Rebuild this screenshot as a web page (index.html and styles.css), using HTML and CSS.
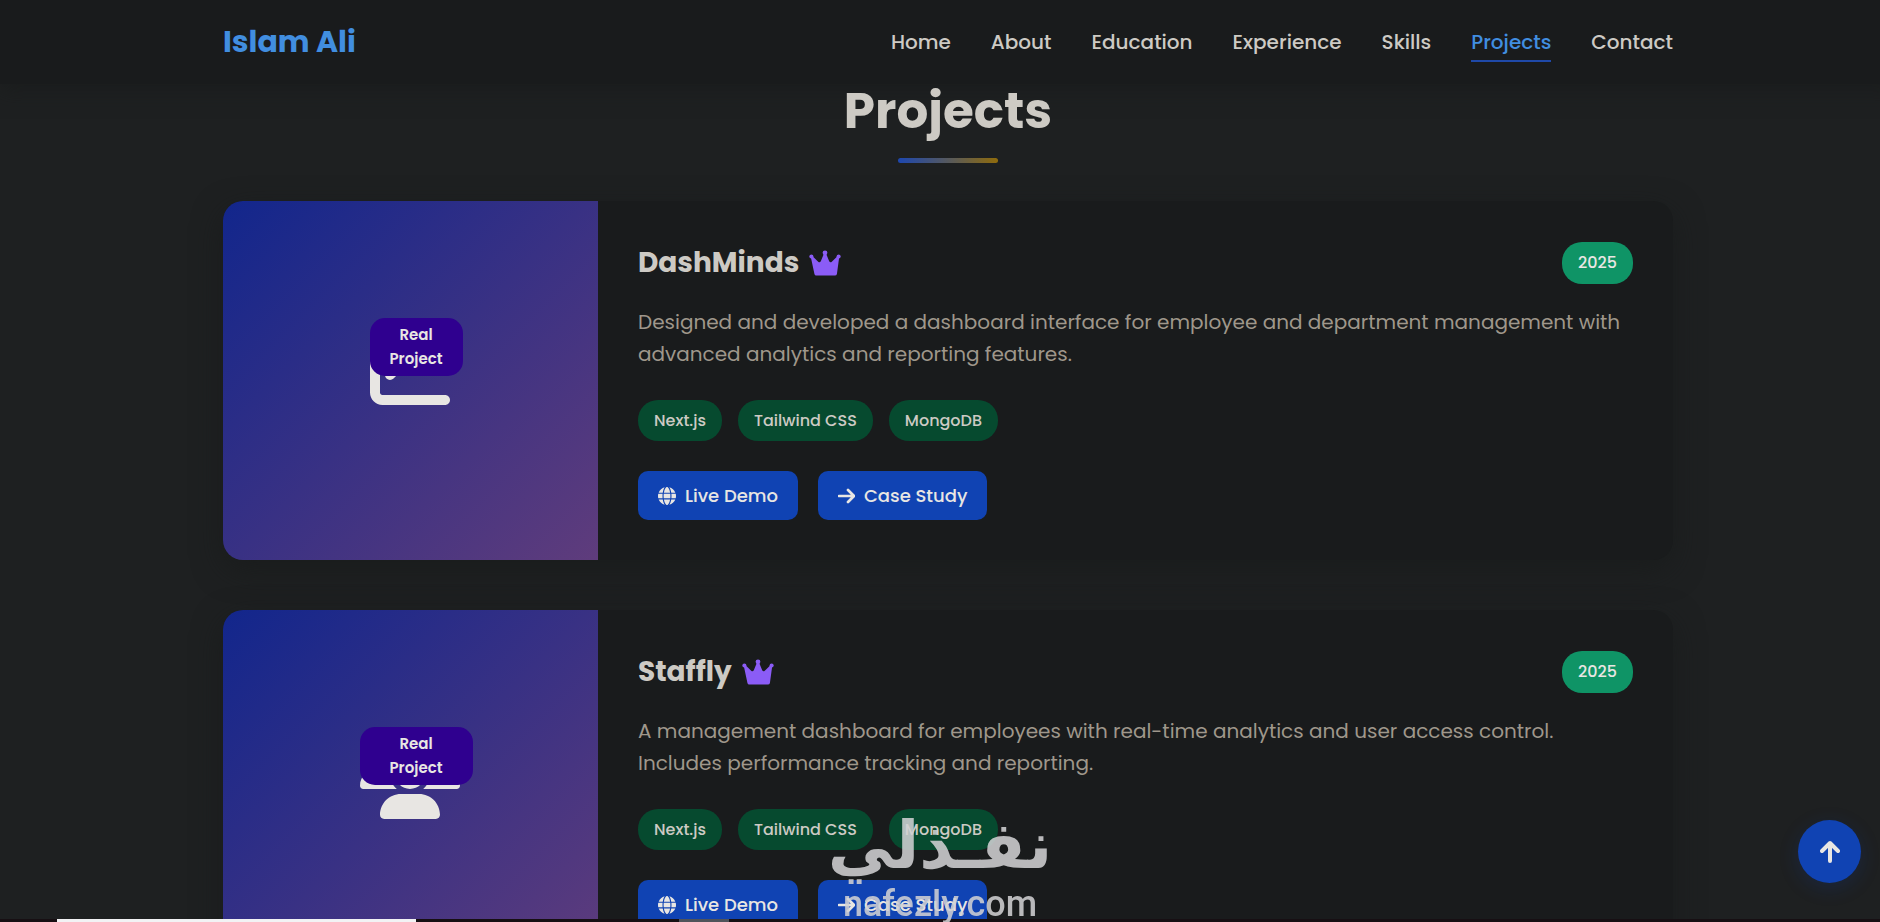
FILE: index.html
```html
<!DOCTYPE html>
<html lang="en">

<head>
    <meta charset="utf-8">
    <meta name="viewport" content="width=device-width, initial-scale=1">
    <title>Islam Ali | Projects</title>

    <link rel="stylesheet" href="styles.css">
</head>

<body>

    <!-- Icons used more than once -->
    <svg class="icon-defs" aria-hidden="true">
        <symbol id="icon-crown" viewBox="0 0 94 76">
            <circle cx="7" cy="19" r="6" />
            <circle cx="47" cy="8" r="7" />
            <circle cx="87" cy="19" r="6" />
            <path d="M5 19L9 17L27 34Q32 38 35 32L44 10H50L59 32Q62 38 67 34L85 17L89 19L82 70Q81 75 76 75H21Q17 75 16 70Z" />
        </symbol>
        <symbol id="icon-globe" viewBox="0 0 512 512">
            <path d="M352 256c0 22.2-1.2 43.6-3.3 64H163.3c-2.2-20.4-3.3-41.8-3.3-64s1.2-43.6 3.3-64H348.7c2.2 20.4 3.3 41.8 3.3 64zm28.8-64H503.9c5.3 20.5 8.1 41.9 8.1 64s-2.8 43.5-8.1 64H380.8c2.1-20.6 3.2-42 3.2-64s-1.1-43.4-3.2-64zm112.6-32H376.7c-10-63.9-29.8-117.4-55.3-151.6c78.3 20.7 142 77.5 171.9 151.6zm-149.1 0H167.7c6.1-36.4 15.5-68.6 27-94.7c10.5-23.6 22.2-40.7 33.5-51.5C239.4 3.2 248.7 0 256 0s16.6 3.2 27.8 13.8c11.3 10.8 23 27.9 33.5 51.5c11.6 26 20.9 58.2 27 94.7zm-209 0H18.6C48.6 85.9 112.2 29.1 190.6 8.4C165.1 42.6 145.3 96.1 135.3 160zM8.1 192H131.2c-2.1 20.6-3.2 42-3.2 64s1.1 43.4 3.2 64H8.1C2.8 299.5 0 278.1 0 256s2.8-43.5 8.1-64zM194.7 446.6c-11.6-26-20.9-58.2-27-94.6H344.3c-6.1 36.4-15.5 68.6-27 94.6c-10.5 23.6-22.2 40.7-33.5 51.5C272.6 508.8 263.3 512 256 512s-16.6-3.2-27.8-13.8c-11.3-10.8-23-27.9-33.5-51.5zM135.3 352c10 63.9 29.8 117.4 55.3 151.6C112.2 482.9 48.6 426.1 18.6 352H135.3zm358.1 0c-30 74.1-93.6 130.9-171.9 151.6c25.5-34.2 45.2-87.7 55.3-151.6H493.4z" />
        </symbol>
        <symbol id="icon-arrow" viewBox="0 0 17 18">
            <path d="M1 9H15M10 3L16 9L10 15" fill="none" stroke="currentColor" stroke-width="2.7" stroke-linecap="round" stroke-linejoin="round" />
        </symbol>
    </svg>

    <header class="header">
        <div class="container header-inner">
            <a href="#home" class="logo">Islam Ali</a>
            <nav>
                <ul class="nav-list">
                    <li><a href="#home" class="nav-link">Home</a></li>
                    <li><a href="#about" class="nav-link">About</a></li>
                    <li><a href="#education" class="nav-link">Education</a></li>
                    <li><a href="#experience" class="nav-link">Experience</a></li>
                    <li><a href="#skills" class="nav-link">Skills</a></li>
                    <li><a href="#projects" class="nav-link active">Projects</a></li>
                    <li><a href="#contact" class="nav-link">Contact</a></li>
                </ul>
            </nav>
        </div>
    </header>

    <main class="container projects" id="projects">
        <h2 class="section-title">Projects</h2>

        <article class="card">
            <div class="card-image">
                <div class="card-icon">
                    <svg width="80" height="80" viewBox="0 0 512 512" aria-hidden="true">
                        <path d="M64 64c0-17.7-14.3-32-32-32S0 46.3 0 64V400c0 44.2 35.8 80 80 80H480c17.7 0 32-14.3 32-32s-14.3-32-32-32H80c-8.8 0-16-7.2-16-16V64z" />
                        <path d="M128 288L240 176L320 256L448 128" fill="none" stroke="currentColor" stroke-width="64" stroke-linecap="round" stroke-linejoin="round" />
                    </svg>
                    <span class="badge">Real Project</span>
                </div>
            </div>
            <div class="card-content">
                <div class="card-header">
                    <h3 class="card-title">DashMinds <svg class="crown" aria-hidden="true"><use href="#icon-crown" /></svg></h3>
                    <span class="year">2025</span>
                </div>
                <p class="card-text">Designed and developed a dashboard interface for employee and department management with<br> advanced analytics and reporting features.</p>
                <ul class="tags">
                    <li class="tag">Next.js</li>
                    <li class="tag">Tailwind CSS</li>
                    <li class="tag">MongoDB</li>
                </ul>
                <div class="links">
                    <a href="#demo" class="btn"><svg class="btn-icon" aria-hidden="true"><use href="#icon-globe" /></svg>Live Demo</a>
                    <a href="#case" class="btn"><svg class="btn-icon arrow" aria-hidden="true"><use href="#icon-arrow" /></svg>Case Study</a>
                </div>
            </div>
        </article>

        <article class="card">
            <div class="card-image">
                <div class="card-icon">
                    <svg width="100" height="80" viewBox="0 0 640 512" aria-hidden="true">
                        <path d="M144 0a80 80 0 1 1 0 160A80 80 0 1 1 144 0zM512 0a80 80 0 1 1 0 160A80 80 0 1 1 512 0zM0 298.7C0 239.8 47.8 192 106.7 192h42.7c15.9 0 31 3.5 44.6 9.7c-1.3 7.2-1.9 14.7-1.9 22.3c0 38.2 16.8 72.5 43.3 96c-.2 0-.4 0-.7 0H21.3C9.6 320 0 310.4 0 298.7zM405.3 320c-.2 0-.4 0-.7 0c26.6-23.5 43.3-57.8 43.3-96c0-7.6-.7-15-1.9-22.3c13.6-6.3 28.7-9.7 44.6-9.7h42.7C592.2 192 640 239.8 640 298.7c0 11.8-9.6 21.3-21.3 21.3H405.3zM224 224a96 96 0 1 1 192 0 96 96 0 1 1 -192 0zM128 485.3C128 411.7 187.7 352 261.3 352H378.7C452.3 352 512 411.7 512 485.3c0 14.7-11.9 26.7-26.7 26.7H154.7c-14.7 0-26.7-11.9-26.7-26.7z" />
                    </svg>
                    <span class="badge">Real Project</span>
                </div>
            </div>
            <div class="card-content">
                <div class="card-header">
                    <h3 class="card-title">Staffly <svg class="crown" aria-hidden="true"><use href="#icon-crown" /></svg></h3>
                    <span class="year">2025</span>
                </div>
                <p class="card-text">A management dashboard for employees with real-time analytics and user access control.<br> Includes performance tracking and reporting.</p>
                <ul class="tags">
                    <li class="tag">Next.js</li>
                    <li class="tag">Tailwind CSS</li>
                    <li class="tag">MongoDB</li>
                </ul>
                <div class="links">
                    <a href="#demo" class="btn"><svg class="btn-icon" aria-hidden="true"><use href="#icon-globe" /></svg>Live Demo</a>
                    <a href="#case" class="btn"><svg class="btn-icon arrow" aria-hidden="true"><use href="#icon-arrow" /></svg>Case Study</a>
                </div>
            </div>
        </article>
    </main>

    <button class="to-top" aria-label="Back to top">
        <svg width="20" height="24" viewBox="0 0 20 24" aria-hidden="true">
            <path d="M10 21V3M2 11L10 3L18 11" />
        </svg>
    </button>

    <div class="bottom-strip">
        <div class="strip-light"></div>
        <div class="strip-tab"></div>
    </div>

    <div class="watermark">
        <span class="watermark-ar" lang="ar" dir="rtl">نفـذلي</span>
        <span class="watermark-en">nafezly.com</span>
    </div>

</body>

</html>
```

FILE: styles.css
```css
* {
    box-sizing: border-box;
    margin: 0;
    padding: 0;
}

html {
    overflow: hidden;
}

body {
    margin-right: -16px;
    height: 100vh;
    overflow: hidden;
    background: #1e2021;
    color: #cdcac4;
    font-family: "Poppins", "Inter", sans-serif;
    font-size: 20px;
    line-height: 32px;
}

a {
    color: inherit;
    text-decoration: none;
}

ul {
    list-style: none;
}

svg {
    fill: currentColor;
}

.icon-defs {
    position: absolute;
    width: 0;
    height: 0;
}

.container {
    max-width: 1450px;
    margin: 0 auto;
}

/* Header */

.header {
    position: relative;
    background: #191b1c;
    box-shadow: 0 5px 20px rgba(25, 27, 28, 0.8);
    z-index: 10;
}

.header-inner {
    display: flex;
    justify-content: space-between;
    align-items: center;
    height: 84px;
}

.logo {
    color: #418ee0;
    font-size: 30px;
    font-weight: 700;
}

.nav-list {
    display: flex;
    gap: 40px;
}

.nav-link {
    display: block;
    padding: 4px 0 2px;
    border-bottom: 2px solid transparent;
    font-weight: 500;
}

.nav-link.active {
    color: #418ee0;
    border-bottom-color: #1f49a8;
}

/* Section */

.section-title {
    position: relative;
    margin-bottom: 38px;
    padding-bottom: 25px;
    z-index: 20;
    font-size: 50px;
    font-weight: 700;
    line-height: 54px;
    text-align: center;
}

.section-title::after {
    content: "";
    position: absolute;
    left: 50%;
    bottom: 0;
    width: 100px;
    height: 5px;
    border-radius: 3px;
    background: linear-gradient(to right, #1d47b0, #8f6b0c);
    transform: translateX(-50%);
}

/* Cards */

.card {
    display: flex;
    margin-bottom: 50px;
    border-radius: 20px;
    background: #191b1c;
    box-shadow: 0 10px 30px rgba(25, 27, 28, 0.8);
}

.card-image {
    display: flex;
    justify-content: center;
    align-items: center;
    flex: 0 0 375px;
    padding-right: 2px;
    padding-bottom: 22px;
    border-radius: 20px 0 0 20px;
    background: linear-gradient(135deg, #12268c, #5f3c7c);
}

.card-icon {
    position: relative;
    color: #e8e6e3;
}

.card-icon svg {
    display: block;
}

.badge {
    position: absolute;
    top: -12px;
    right: -13px;
    padding: 5px 16px;
    border-radius: 15px;
    background: #2f008f;
    font-size: 15px;
    font-weight: 600;
    line-height: 24px;
    text-align: center;
}

.card-content {
    flex: 1;
    padding: 40px;
}

.card-header {
    display: flex;
    justify-content: space-between;
    align-items: center;
    height: 44px;
    margin-bottom: 21px;
}

.card-title {
    display: flex;
    align-items: center;
    gap: 10px;
    font-size: 28px;
    font-weight: 700;
}

.crown {
    width: 32px;
    height: 26px;
    color: #8b5cf6;
}

.year {
    padding: 5px 16px;
    border-radius: 20px;
    background: #0f9466;
    color: #e8e6e3;
    font-size: 16px;
    font-weight: 500;
}

.card-text {
    margin-bottom: 30px;
    color: #9f978b;
}

.tags {
    display: flex;
    gap: 16px;
    margin-bottom: 30px;
}

.tag {
    padding: 8px 16px;
    border-radius: 20px;
    background: #064a2f;
    font-size: 16px;
    font-weight: 500;
    line-height: 25px;
}

.links {
    display: flex;
    gap: 20px;
}

.btn {
    display: flex;
    align-items: center;
    gap: 9px;
    padding: 10px 20px;
    border-radius: 10px;
    background: #1043b3;
    color: #e8e6e3;
    font-size: 18px;
    font-weight: 500;
    line-height: 29px;
}

.btn-icon {
    width: 18px;
    height: 18px;
}

.btn-icon.arrow {
    width: 17px;
}

/* Back to top */

.to-top {
    position: fixed;
    right: 19px;
    bottom: 39px;
    display: flex;
    justify-content: center;
    align-items: center;
    width: 63px;
    height: 63px;
    border: none;
    border-radius: 50%;
    background: #1043b3;
    box-shadow: 0 5px 20px rgba(16, 67, 179, 0.2);
    color: #e8e6e3;
    z-index: 30;
}

.to-top path {
    fill: none;
    stroke: currentColor;
    stroke-width: 4;
    stroke-linecap: round;
    stroke-linejoin: round;
}

/* Strip at the bottom edge */

.bottom-strip {
    position: fixed;
    left: 0;
    right: 0;
    bottom: 0;
    display: flex;
    gap: 263px;
    height: 3px;
    padding-left: 57px;
    background: #170f13;
    z-index: 40;
}

.strip-light {
    width: 359px;
    background: #f2f2f4;
}

.strip-tab {
    width: 50px;
    background: #50535a;
}

/* Watermark */

.watermark {
    position: fixed;
    left: 50%;
    bottom: 0;
    display: flex;
    flex-direction: column;
    align-items: center;
    color: #d2d2d4;
    opacity: 0.87;
    transform: translateX(-50%);
    z-index: 50;
}

.watermark-ar {
    font-family: "DejaVu Sans", sans-serif;
    font-size: 66px;
    font-weight: 700;
    line-height: 80px;
}

.watermark-en {
    font-family: "Roboto", sans-serif;
    font-size: 36px;
    font-weight: 500;
    line-height: 36px;
}
```
